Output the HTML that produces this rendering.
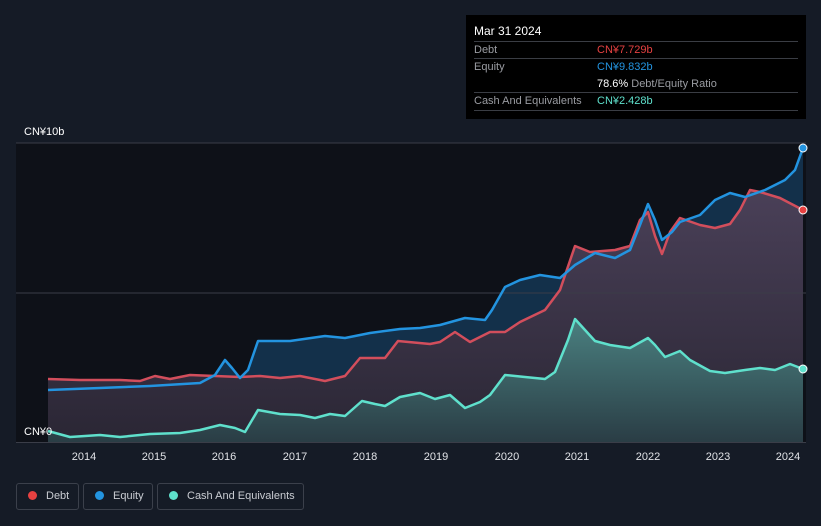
<!DOCTYPE html><html><head><style>
body{margin:0;background:#151b26;width:821px;height:526px;overflow:hidden;font-family:"Liberation Sans",sans-serif}
.tt{position:absolute;left:466px;top:15px;width:340px;height:104px;background:#000;color:#fff;font-size:11px}
.row{position:absolute;left:8px;right:8px;height:17px;line-height:17px;border-top:1px solid #3a3d44;color:#9a9ca2;white-space:nowrap}
.row span{position:absolute;left:123px;top:0}
.lg{position:absolute;top:483px;height:27px;border:1px solid #3b404b;border-radius:3px;color:#c9ccd2;font-size:11px;line-height:25px;box-sizing:border-box;white-space:nowrap}
.lg i{display:inline-block;width:9px;height:9px;border-radius:50%;margin:0 9px 0 11px;vertical-align:-1px}
</style></head><body>
<svg width="821" height="526" style="position:absolute;left:0;top:0">
<defs>
<linearGradient id="cg" x1="0" y1="0" x2="0" y2="1"><stop offset="0" stop-color="#4a8080"/><stop offset="1" stop-color="#2a3d45"/></linearGradient>
<linearGradient id="dg" x1="0" y1="0" x2="0" y2="1"><stop offset="0" stop-color="#4a4058"/><stop offset="1" stop-color="#2a2634"/></linearGradient>
</defs>
<rect x="16" y="143" width="790" height="300" fill="#0e1118"/>
<path d="M48,390 100,388 150,386 200,383 215,375 225,360 232,368 240,378 248,370 258,341 290,341 325,336 345,338 370,333 400,329 420,328 440,325 465,318 485,320 492,310 505,287 520,280 540,275 560,278 575,265 595,253 615,258 630,250 640,225 648,204 655,220 662,240 672,232 680,222 700,215 715,200 730,193 745,197 765,190 785,180 795,170 803,148 L803,442 48,442Z" fill="#13304a"/>
<path d="M48,379 80,380 120,380 140,381 155,376 170,379 190,375 215,376 240,377 260,376 280,378 300,376 325,381 345,376 360,358 385,358 398,341 430,344 440,342 455,332 470,342 490,332 505,332 520,322 545,310 560,290 575,246 590,252 615,250 630,246 640,220 648,212 655,236 662,254 670,232 680,218 700,225 715,228 730,224 740,210 750,190 760,192 780,198 803,210 L803,442 48,442Z" fill="url(#dg)"/>
<path d="M48,431 70,437 100,435 120,437 150,434 180,433 200,430 220,425 235,428 245,432 258,410 280,414 300,415 315,418 330,414 345,416 362,401 375,404 385,406 400,397 420,393 435,399 450,395 465,408 480,402 490,395 505,375 525,377 545,379 555,372 568,340 575,319 585,330 595,341 610,345 630,348 648,338 655,345 665,357 680,351 690,360 710,371 725,373 745,370 760,368 775,370 790,364 803,369 L803,442 48,442Z" fill="url(#cg)"/>
<line x1="16" y1="143" x2="806" y2="143" stroke="#3a3d48"/>
<line x1="16" y1="293" x2="806" y2="293" stroke="#3a3d48"/>
<line x1="16" y1="442.5" x2="806" y2="442.5" stroke="#3a3d48"/>
<polyline fill="none" stroke="#d24e5c" stroke-width="2.5" stroke-linejoin="round" points="48,379 80,380 120,380 140,381 155,376 170,379 190,375 215,376 240,377 260,376 280,378 300,376 325,381 345,376 360,358 385,358 398,341 430,344 440,342 455,332 470,342 490,332 505,332 520,322 545,310 560,290 575,246 590,252 615,250 630,246 640,220 648,212 655,236 662,254 670,232 680,218 700,225 715,228 730,224 740,210 750,190 760,192 780,198 803,210"/>
<polyline fill="none" stroke="#2394e0" stroke-width="2.5" stroke-linejoin="round" points="48,390 100,388 150,386 200,383 215,375 225,360 232,368 240,378 248,370 258,341 290,341 325,336 345,338 370,333 400,329 420,328 440,325 465,318 485,320 492,310 505,287 520,280 540,275 560,278 575,265 595,253 615,258 630,250 640,225 648,204 655,220 662,240 672,232 680,222 700,215 715,200 730,193 745,197 765,190 785,180 795,170 803,148"/>
<polyline fill="none" stroke="#5fe0cc" stroke-width="2.5" stroke-linejoin="round" points="48,431 70,437 100,435 120,437 150,434 180,433 200,430 220,425 235,428 245,432 258,410 280,414 300,415 315,418 330,414 345,416 362,401 375,404 385,406 400,397 420,393 435,399 450,395 465,408 480,402 490,395 505,375 525,377 545,379 555,372 568,340 575,319 585,330 595,341 610,345 630,348 648,338 655,345 665,357 680,351 690,360 710,371 725,373 745,370 760,368 775,370 790,364 803,369"/>
<circle cx="803" cy="148" r="4" fill="#2394e0" stroke="#fff" stroke-width="1"/>
<circle cx="803" cy="210" r="4" fill="#e64141" stroke="#fff" stroke-width="1"/>
<circle cx="803" cy="369" r="4" fill="#5fe0cc" stroke="#fff" stroke-width="1"/>
<g fill="#fff" font-size="11" font-family="Liberation Sans">
<text x="24" y="135">CN¥10b</text><text x="24" y="435">CN¥0</text>
</g>
<g fill="#e0e2e6" font-size="11" font-family="Liberation Sans" text-anchor="middle">
<text x="84" y="460">2014</text><text x="154" y="460">2015</text><text x="224" y="460">2016</text><text x="295" y="460">2017</text><text x="365" y="460">2018</text><text x="436" y="460">2019</text><text x="507" y="460">2020</text><text x="577" y="460">2021</text><text x="648" y="460">2022</text><text x="718" y="460">2023</text><text x="788" y="460">2024</text>
</g>
</svg>
<div class="tt">
<div style="position:absolute;left:8px;top:9px;font-size:12px">Mar 31 2024</div>
<div class="row" style="top:26px">Debt<span style="color:#e64141">CN¥7.729b</span></div>
<div class="row" style="top:43px">Equity<span style="color:#2394e0">CN¥9.832b</span></div>
<div class="row" style="top:61px;border-top:none"><span style="color:#fff">78.6% <b style="font-weight:normal;color:#9a9ca2">Debt/Equity Ratio</b></span></div>
<div class="row" style="top:77px">Cash And Equivalents<span style="color:#5fe0cc">CN¥2.428b</span></div>
<div style="position:absolute;left:8px;right:8px;top:95px;border-top:1px solid #3a3d44"></div>
</div>
<div class="lg" style="left:16px;width:63px"><i style="background:#e64141"></i>Debt</div>
<div class="lg" style="left:83px;width:70px"><i style="background:#2394e0"></i>Equity</div>
<div class="lg" style="left:157px;width:147px"><i style="background:#5fe0cc"></i>Cash And Equivalents</div>
</body></html>
